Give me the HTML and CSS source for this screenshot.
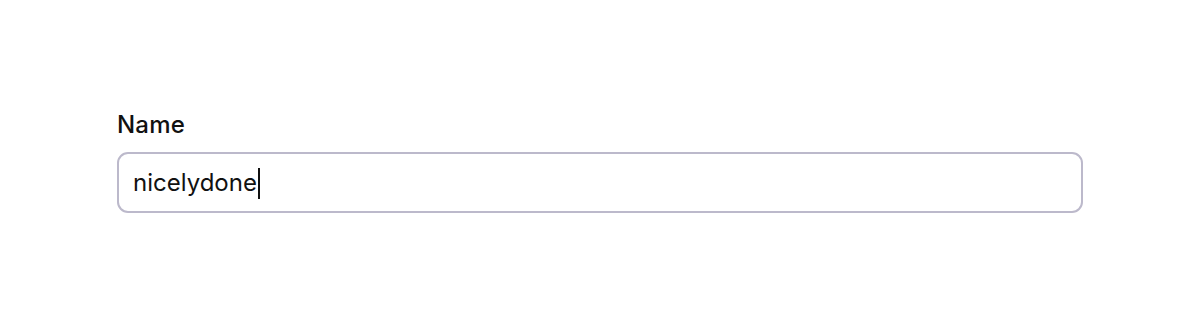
FILE: index.html
```html
<!DOCTYPE html>
<html lang="en">
<head>
    <meta charset="UTF-8">
    <meta name="viewport" content="width=device-width, initial-scale=1.0">
    <title>Name field</title>
    <link rel="stylesheet" href="styles.css">
</head>
<body>
    <div class="field">
        <label class="field-label" for="name">Name</label>
        <div class="field-input" id="name">nicelydone<span class="caret"></span></div>
    </div>
</body>
</html>
```

FILE: styles.css
```css
body {
    margin: 0;
    background: #fff;
    font-family: Inter, "Noto Sans", sans-serif;
    color: #111;
}
.field {
    max-width: 966px;
    margin: 0 auto;
    padding-top: 109px;
    display: flex;
    flex-direction: column;
    gap: 12px;
}
.field-label {
    font-size: 24px;
    font-weight: 500;
    line-height: 31px;
    letter-spacing: 0.2px;
}
.field-input {
    height: 61px;
    box-sizing: border-box;
    border: 2px solid #bcb9cb;
    border-radius: 11px;
    padding: 0 14px;
    display: flex;
    align-items: center;
    font-size: 24px;
    color: #111;
}
.caret {
    display: inline-block;
    width: 2px;
    height: 31px;
    background: #111;
    margin-left: 1px;
    margin-top: 2px;
}
```
